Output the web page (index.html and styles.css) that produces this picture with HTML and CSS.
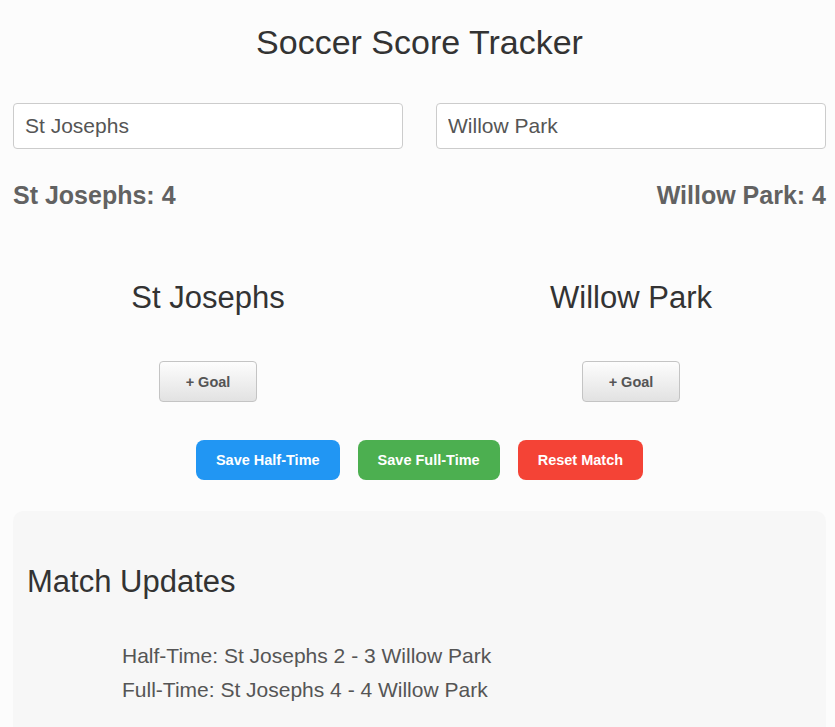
FILE: index.html
```html
<!DOCTYPE html>
<html lang="en">
<head>
  <meta charset="UTF-8">
  <meta name="viewport" content="width=device-width, initial-scale=1">
  <title>Soccer Score Tracker</title>
  <link rel="stylesheet" href="styles.css">
</head>
<body>
  <h1 class="title">Soccer Score Tracker</h1>

  <div class="team-inputs">
    <input type="text" class="team-input" id="home-input" value="St Josephs">
    <input type="text" class="team-input" id="away-input" value="Willow Park">
  </div>

  <div class="scoreboard">
    <span id="home-score">St Josephs: 4</span>
    <span id="away-score">Willow Park: 4</span>
  </div>

  <div class="teams">
    <div class="team">
      <h2 class="team-name" id="home-name">St Josephs</h2>
      <button class="goal-btn" onclick="addGoal('home')">+ Goal</button>
    </div>
    <div class="team">
      <h2 class="team-name" id="away-name">Willow Park</h2>
      <button class="goal-btn" onclick="addGoal('away')">+ Goal</button>
    </div>
  </div>

  <div class="actions">
    <button class="action-btn half" onclick="saveUpdate('Half-Time')">Save Half-Time</button>
    <button class="action-btn full" onclick="saveUpdate('Full-Time')">Save Full-Time</button>
    <button class="action-btn reset" onclick="resetMatch()">Reset Match</button>
  </div>

  <section class="updates">
    <h2 class="updates-title">Match Updates</h2>
    <ul class="updates-list" id="updates">
      <li>Half-Time: St Josephs 2 - 3 Willow Park</li>
      <li>Full-Time: St Josephs 4 - 4 Willow Park</li>
    </ul>
  </section>

  <script>
    const score = { home: 4, away: 4 };

    function teamName(side) {
      return document.getElementById(side + '-input').value;
    }

    function render() {
      document.getElementById('home-name').textContent = teamName('home');
      document.getElementById('away-name').textContent = teamName('away');
      document.getElementById('home-score').textContent = teamName('home') + ': ' + score.home;
      document.getElementById('away-score').textContent = teamName('away') + ': ' + score.away;
    }

    function addGoal(side) {
      score[side]++;
      render();
    }

    function saveUpdate(label) {
      const li = document.createElement('li');
      li.textContent = label + ': ' + teamName('home') + ' ' + score.home + ' - ' + score.away + ' ' + teamName('away');
      document.getElementById('updates').appendChild(li);
    }

    function resetMatch() {
      score.home = 0;
      score.away = 0;
      document.getElementById('updates').innerHTML = '';
      render();
    }

    document.getElementById('home-input').addEventListener('input', render);
    document.getElementById('away-input').addEventListener('input', render);
  </script>
</body>
</html>
```

FILE: styles.css
```css
body {
  font-family: "Liberation Sans", Arial, sans-serif;
  margin: 0;
  padding: 0 9px 0 13px;
  background-color: #fcfcfc;
  color: #333;
}
.title {
  margin: 22px 0 0;
  font-size: 34px;
  line-height: 40px;
  font-weight: normal;
  text-align: center;
  color: #333;
}
.team-inputs {
  margin-top: 41px;
  display: grid;
  grid-template-columns: 1fr 1fr;
  gap: 33px;
}
.team-input {
  box-sizing: border-box;
  height: 46px;
  padding: 0 11px 1px;
  font-family: inherit;
  font-size: 21px;
  color: #555;
  background: #fff;
  border: 1px solid #ccc;
  border-radius: 4px;
}
.scoreboard {
  margin-top: 31px;
  display: flex;
  justify-content: space-between;
  font-size: 25px;
  line-height: 30px;
  font-weight: bold;
  color: #626262;
}
.teams {
  margin-top: 70px;
  display: grid;
  grid-template-columns: 1fr 1fr;
  gap: 33px;
}
.team {
  display: flex;
  flex-direction: column;
  align-items: center;
}
.team-name {
  margin: 0;
  font-size: 31px;
  line-height: 36px;
  font-weight: normal;
  color: #333;
}
.goal-btn {
  margin-top: 45px;
  height: 41px;
  padding: 0 26px;
  font-family: inherit;
  font-size: 14.5px;
  font-weight: bold;
  color: #555;
  background: linear-gradient(#fdfdfd, #e2e2e2);
  border: 1px solid #c4c4c4;
  border-radius: 4px;
  cursor: pointer;
}
.actions {
  margin-top: 38px;
  display: flex;
  justify-content: center;
  gap: 18px;
}
.action-btn {
  height: 40px;
  padding: 0 20px;
  font-family: inherit;
  font-size: 14.5px;
  font-weight: bold;
  color: #fff;
  border: none;
  border-radius: 8px;
  cursor: pointer;
}
.half {
  background-color: #2196f3;
}
.full {
  background-color: #4caf50;
}
.reset {
  background-color: #f44336;
}
.updates {
  margin-top: 31px;
  padding: 53px 14px 30px;
  background-color: #f7f7f7;
  border-radius: 10px;
}
.updates-title {
  margin: 0;
  font-size: 31px;
  line-height: 36px;
  font-weight: normal;
  color: #333;
}
.updates-list {
  margin: 39px 0 0;
  padding-left: 95px;
  list-style: none;
}
.updates-list li {
  font-size: 21px;
  line-height: 34px;
  color: #555;
}
```
